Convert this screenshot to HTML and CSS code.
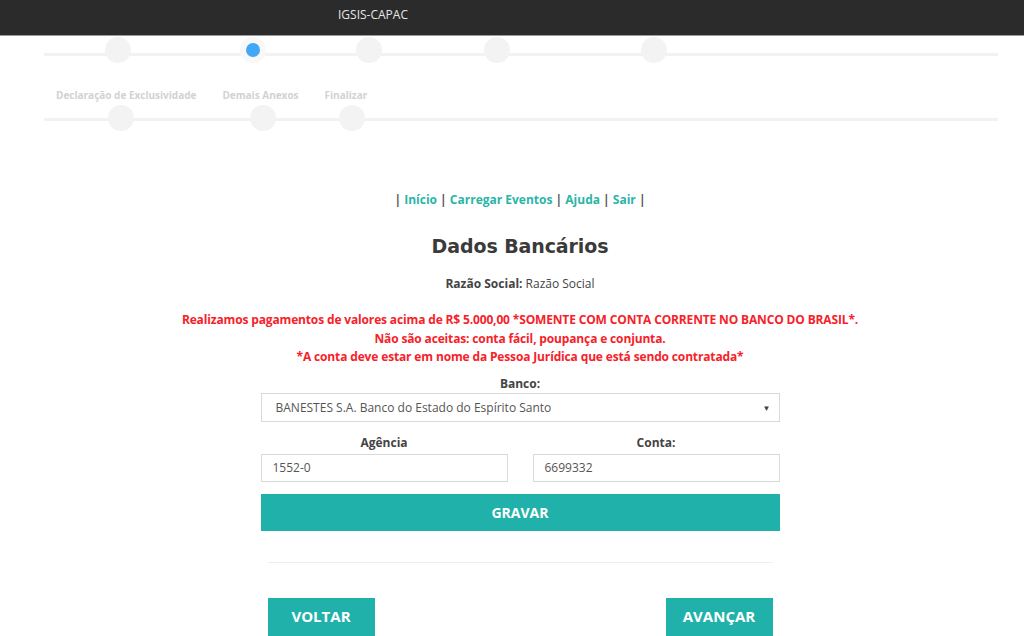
FILE: index.html
```html
<!DOCTYPE html>
<html lang="pt-BR">
<head>
<meta charset="utf-8">
<title>IGSIS-CAPAC</title>
<link rel="stylesheet" href="styles.css">
</head>
<body>
<header class="topbar">
  <span class="brand">IGSIS-CAPAC</span>
</header>

<div class="stepper">
  <div class="track track-top">
    <span class="dot d1"></span>
    <span class="dot d2 active"><i></i></span>
    <span class="dot d3"></span>
    <span class="dot d4"></span>
    <span class="dot d5"></span>
  </div>
  <div class="step-labels">
    <span class="lbl l1">Declaração de Exclusividade</span>
    <span class="lbl l2">Demais Anexos</span>
    <span class="lbl l3">Finalizar</span>
  </div>
  <div class="track track-bottom">
    <span class="dot b1"></span>
    <span class="dot b2"></span>
    <span class="dot b3"></span>
  </div>
</div>

<main class="content">
  <nav class="menu">
    | <a href="#">Início</a> | <a href="#">Carregar Eventos</a> | <a href="#">Ajuda</a> | <a href="#">Sair</a> |
  </nav>

  <h1 class="title">Dados Bancários</h1>
  <p class="razao"><strong>Razão Social:</strong> Razão Social</p>

  <div class="warning">
    <p>Realizamos pagamentos de valores acima de R$ 5.000,00 *SOMENTE COM CONTA CORRENTE NO BANCO DO BRASIL*.</p>
    <p>Não são aceitas: conta fácil, poupança e conjunta.</p>
    <p>*A conta deve estar em nome da Pessoa Jurídica que está sendo contratada*</p>
  </div>

  <form class="form">
    <label class="field-label">Banco:</label>
    <div class="select">
      <span>BANESTES S.A. Banco do Estado do Espírito Santo</span>
      <span class="caret">▼</span>
    </div>

    <div class="row">
      <div class="col">
        <label class="field-label">Agência</label>
        <div class="input">1552-0</div>
      </div>
      <div class="col">
        <label class="field-label">Conta:</label>
        <div class="input">6699332</div>
      </div>
    </div>

    <button type="button" class="btn btn-block">GRAVAR</button>
  </form>

  <div class="footer">
    <hr class="sep">
    <div class="nav-buttons">
      <button type="button" class="btn btn-nav">VOLTAR</button>
      <button type="button" class="btn btn-nav">AVANÇAR</button>
    </div>
  </div>
</main>
</body>
</html>
```

FILE: styles.css
```css
* { box-sizing: border-box; }

html, body {
  margin: 0;
  padding: 0;
  background: #fff;
  font-family: "Open Sans", "Liberation Sans", sans-serif;
  color: #333;
  overflow: hidden;
}

.topbar {
  height: 36px;
  background: #2b2b2b;
  border-bottom: 1px solid #9a9a9a;
  padding-left: 338px;
  display: flex;
  align-items: flex-start;
}

.brand {
  color: #e6e6e6;
  font-size: 12px;
  line-height: 14px;
  margin-top: 8px;
}

/* stepper */
.stepper {
  padding: 0 26px 0 44px;
}

.track {
  position: relative;
  height: 26px;
}

.track::before {
  content: "";
  position: absolute;
  left: 0;
  right: 0;
  top: 16px;
  height: 3px;
  background: #f2f2f2;
}

.track-top { margin-top: 1px; }
.track-bottom::before { top: 13px; }

.dot {
  position: absolute;
  top: 0;
  width: 26px;
  height: 26px;
  border-radius: 50%;
  background: #f3f3f3;
  display: flex;
  align-items: center;
  justify-content: center;
}

.dot.active { background: #f8f8f8; }
.dot.active i {
  width: 14px;
  height: 14px;
  border-radius: 50%;
  background: #41a7f6;
}

.d1 { left: 61px; }
.d2 { left: 196px; }
.d3 { left: 312px; }
.d4 { left: 440px; }
.d5 { left: 597px; }

.b1 { left: 64px; }
.b2 { left: 206px; }
.b3 { left: 295px; }

.step-labels {
  display: flex;
  height: 40px;
  align-items: flex-start;
  padding-left: 12px;
  padding-top: 21px;
  gap: 26px;
  margin-top: 4px;
}

.lbl {
  font-size: 10px;
  font-weight: 700;
  color: #d2d2d2;
  line-height: 14px;
}

.track-bottom { margin-top: -2px; }

/* main content */
.content {
  width: 519px;
  margin: 0 auto;
  position: relative;
  left: 8px;
  padding-top: 59px;
}

.menu {
  text-align: center;
  font-size: 12px;
  font-weight: 700;
  color: #555;
  line-height: 20px;
}

.menu a {
  color: #2bb5a8;
  text-decoration: none;
}

.title {
  margin: 22px 0 0;
  text-align: center;
  font-family: "DejaVu Sans", "Open Sans", sans-serif;
  font-size: 19px;
  font-weight: 700;
  color: #3a3a3a;
  line-height: 28px;
  letter-spacing: -0.1px;
}

.razao {
  margin: 15px 0 0;
  text-align: center;
  font-size: 12px;
  line-height: 18px;
  color: #444;
}

.warning {
  margin-top: 18px;
  text-align: center;
  color: #f6222a;
  font-size: 12px;
  font-weight: 700;
  line-height: 18.5px;
  letter-spacing: -0.15px;
  margin-left: -120px;
  margin-right: -120px;
}

.warning p { margin: 0; }

.form {
  margin-top: 8px;
}

.field-label {
  display: block;
  text-align: center;
  font-size: 12px;
  font-weight: 700;
  color: #444;
  line-height: 18px;
  margin-bottom: 0;
}

.select {
  height: 29px;
  border: 1px solid #d9d9d9;
  display: flex;
  align-items: center;
  justify-content: space-between;
  padding: 0 8px 0 14px;
  font-size: 12px;
  color: #555;
}

.caret {
  font-size: 8px;
  color: #444;
}

.row {
  display: flex;
  gap: 25px;
  margin-top: 12px;
}

.col { flex: 1; }

.col .field-label { margin-bottom: 2px; }

.input {
  height: 28px;
  border: 1px solid #d9d9d9;
  display: flex;
  align-items: center;
  padding: 0 11px;
  font-size: 12px;
  color: #555;
}

.btn {
  border: 0;
  background: #20b2aa;
  color: #fff;
  font-family: "Open Sans", "Liberation Sans", sans-serif;
  font-weight: 700;
  cursor: pointer;
}

.btn-block {
  display: block;
  width: 100%;
  height: 37px;
  margin-top: 12px;
  font-size: 14px;
}

.footer {
  padding: 0 7px 0 7px;
  margin-top: 31px;
}

.sep {
  border: 0;
  border-top: 1px solid #eee;
  margin: 0;
}

.nav-buttons {
  display: flex;
  justify-content: space-between;
  margin-top: 35px;
}

.btn-nav {
  width: 107px;
  height: 40px;
  padding: 0 0 4px;
  font-size: 15px;
}
```
